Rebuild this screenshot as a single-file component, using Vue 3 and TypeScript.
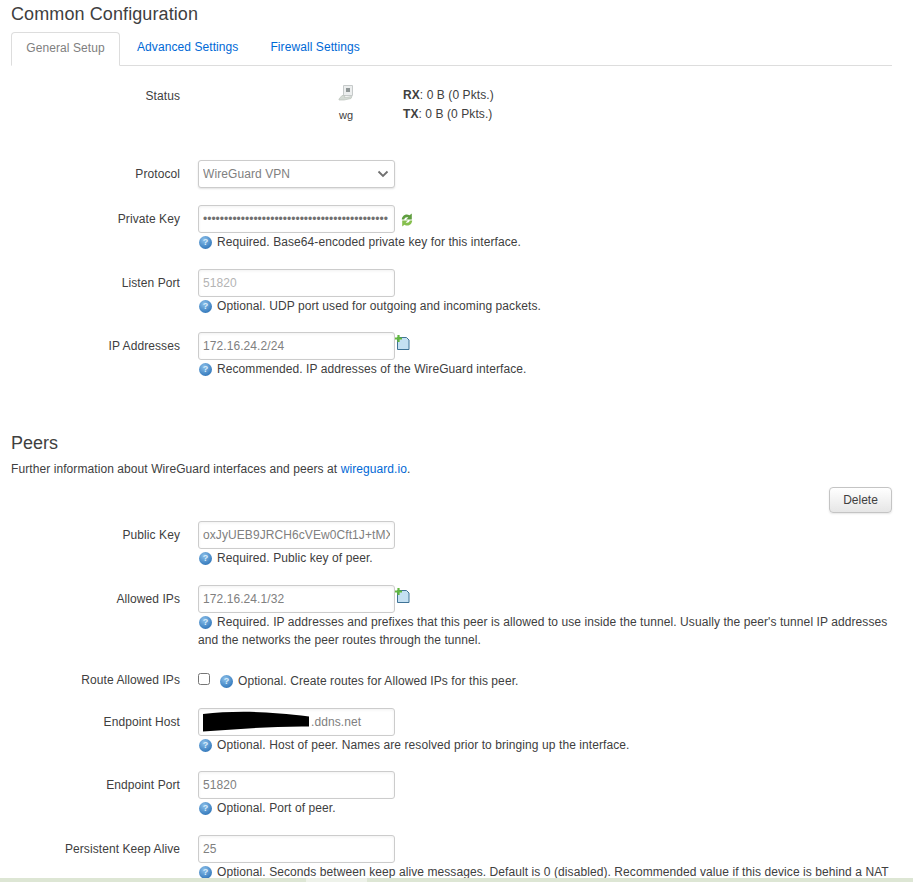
<script setup lang="ts">
const privateKey = '•'.repeat(44)
</script>

<template>
  <div class="page">
    <h3 class="title">Common Configuration</h3>
    <ul class="tabs">
      <li class="tab active">General Setup</li>
      <li class="tab link first">Advanced Settings</li>
      <li class="tab link">Firewall Settings</li>
    </ul>

    <div class="row status-row">
      <div class="label">Status</div>
      <div class="status">
        <div class="dev">
          <svg width="16" height="16" viewBox="0 0 16 16">
            <path d="M5.500 .5h9v10h-9z" fill="#eceeee" stroke="#c6caca" />
            <rect x="8" y="3" width="4" height="4" fill="#8f9696" />
            <path d="M1 14l3-3.500h3l-.5 2 7.500-1-1 2-7 1.500H1z" fill="#d4dad4" stroke="#bcc3bc" stroke-width=".7" />
          </svg>
          <span>wg</span>
        </div>
        <div class="stats">
          <div><b>RX</b>: 0 B (0 Pkts.)</div>
          <div><b>TX</b>: 0 B (0 Pkts.)</div>
        </div>
      </div>
    </div>

    <div class="row proto-row">
      <div class="label">Protocol</div>
      <div class="select-wrap">
        <select class="input select"><option>WireGuard VPN</option></select>
        <svg class="chev" width="12" height="8" viewBox="0 0 12 8"><path d="M1.500 1.500L6 6l4.500-4.500" fill="none" stroke="#707070" stroke-width="1.800" /></svg>
      </div>
    </div>

    <div class="row">
      <div class="label">Private Key</div>
      <div>
        <div class="with-icon">
          <input class="input dots" :value="privateKey" readonly />
          <svg class="refresh" width="12" height="14" viewBox="0 0 12 14">
            <path d="M.8 6.500C1 2.500 5 0 8.500 2.300L10.800 .5V6.500H5L7.300 4.600C5.500 3.700 3.800 4.500 3.200 6.500z" fill="#5f9e3f" />
            <path d="M11.200 7.500C11 11.500 7 14 3.500 11.700L1.200 13.500V7.500H7L4.700 9.400C6.500 10.300 8.200 9.500 8.800 7.500z" fill="#86bf4e" />
          </svg>
        </div>
        <div class="help"><i class="q">?</i>Required. Base64-encoded private key for this interface.</div>
      </div>
    </div>

    <div class="row short">
      <div class="label">Listen Port</div>
      <div>
        <input class="input" placeholder="51820" />
        <div class="help"><i class="q">?</i>Optional. UDP port used for outgoing and incoming packets.</div>
      </div>
    </div>

    <div class="row">
      <div class="label">IP Addresses</div>
      <div>
        <div class="with-icon">
          <input class="input" value="172.16.24.2/24" readonly />
          <svg class="add" width="15" height="15" viewBox="0 0 15 15">
            <path d="M2.500 2.500h9l2.500 2.500v9.500h-11.500z" fill="#c4e0f2" stroke="#3f7396" />
            <path d="M3.500 0v7M0 3.500h7" stroke="#62b83f" stroke-width="2.200" />
          </svg>
        </div>
        <div class="help"><i class="q">?</i>Recommended. IP addresses of the WireGuard interface.</div>
      </div>
    </div>

    <h3 class="title peers">Peers</h3>
    <p class="info">Further information about WireGuard interfaces and peers at <a>wireguard.io</a>.</p>
    <div class="actions"><button class="btn">Delete</button></div>

    <div class="row">
      <div class="label">Public Key</div>
      <div>
        <input class="input" value="oxJyUEB9JRCH6cVEw0Cft1J+tMX" readonly />
        <div class="help"><i class="q">?</i>Required. Public key of peer.</div>
      </div>
    </div>

    <div class="row allowed">
      <div class="label">Allowed IPs</div>
      <div>
        <div class="with-icon">
          <input class="input" value="172.16.24.1/32" readonly />
          <svg class="add" width="15" height="15" viewBox="0 0 15 15">
            <path d="M2.500 2.500h9l2.500 2.500v9.500h-11.500z" fill="#c4e0f2" stroke="#3f7396" />
            <path d="M3.500 0v7M0 3.500h7" stroke="#62b83f" stroke-width="2.200" />
          </svg>
        </div>
        <div class="help wrap"><i class="q">?</i>Required. IP addresses and prefixes that this peer is allowed to use inside the tunnel. Usually the peer's tunnel IP addresses and the networks the peer routes through the tunnel.</div>
      </div>
    </div>

    <div class="row check-row">
      <div class="label">Route Allowed IPs</div>
      <div class="check-line">
        <input class="check" type="checkbox" />
        <span class="help inline"><i class="q">?</i>Optional. Create routes for Allowed IPs for this peer.</span>
      </div>
    </div>

    <div class="row short">
      <div class="label">Endpoint Host</div>
      <div>
        <div class="host">
          <input class="input host-input" value=".ddns.net" readonly />
          <svg class="scribble" width="107" height="21" viewBox="0 0 107 21"><path d="M1 3C30 0 60-.5 107 5.500V15.500C70 15 35 18.500 1 20.500z" fill="#000" /></svg>
        </div>
        <div class="help"><i class="q">?</i>Optional. Host of peer. Names are resolved prior to bringing up the interface.</div>
      </div>
    </div>

    <div class="row">
      <div class="label">Endpoint Port</div>
      <div>
        <input class="input" value="51820" readonly />
        <div class="help"><i class="q">?</i>Optional. Port of peer.</div>
      </div>
    </div>

    <div class="row">
      <div class="label">Persistent Keep Alive</div>
      <div>
        <input class="input" value="25" readonly />
        <div class="help"><i class="q">?</i>Optional. Seconds between keep alive messages. Default is 0 (disabled). Recommended value if this device is behind a NAT</div>
      </div>
    </div>

    <div class="strip"><span></span><span class="light"></span><span></span></div>
  </div>
</template>

<style scoped>
.page {
  position: relative;
  width: 913px;
  height: 882px;
  overflow: hidden;
  box-sizing: border-box;
  padding: 0 21px 0 11px;
  background: #fff;
  color: #404040;
  font: 12px/18px "Liberation Sans", Arial, sans-serif;
  letter-spacing: .08px;
}
.title {
  margin: 0;
  padding-top: 4px;
  font-size: 18px;
  font-weight: 400;
  line-height: 20px;
  letter-spacing: .1px;
  color: #404040;
}
.tabs {
  display: flex;
  box-sizing: border-box;
  margin: 8px 0 0;
  padding: 0;
  list-style: none;
  height: 34px;
  border-bottom: 1px solid #ddd;
}
.tab {
  box-sizing: border-box;
  height: 34px;
  line-height: 30px;
}
.active {
  width: 109px;
  text-align: center;
  color: #808080;
  background: #fff;
  border: 1px solid #ddd;
  border-bottom-color: #fff;
  border-radius: 4px 4px 0 0;
}
.link { color: #0069d6; margin-left: 32px; }
.link.first { margin-left: 17px; }
.row {
  display: grid;
  grid-template-columns: 169px 197px;
  column-gap: 18px;
  margin-bottom: 19px;
}
.row.short { margin-bottom: 18px; }
.row.allowed { margin-bottom: 21px; }
.label {
  text-align: right;
  line-height: 18px;
  padding-top: 5px;
}
.status-row { margin: 19px 0 0; height: 75px; }
.status-row .label { padding-top: 2px; }
.status { display: flex; }
.dev {
  display: flex;
  flex-direction: column;
  align-items: center;
  flex: none;
  width: 16px;
  margin: 0 49px 0 140px;
  font-size: 11px;
  line-height: 18px;
}
.dev svg { margin-bottom: 5px; }
.stats { white-space: nowrap; margin-top: 1px; line-height: 19px; }
.proto-row { margin-bottom: 17px; }
.select-wrap { position: relative; width: 197px; height: 28px; }
.input {
  display: block;
  flex: none;
  box-sizing: border-box;
  width: 197px;
  height: 28px;
  margin: 0;
  border: 1px solid #ccc;
  border-radius: 3px;
  outline: none;
  background: #fff;
  color: #808080;
  padding: 0 4px;
  font: 12px "Liberation Sans", Arial, sans-serif;
  letter-spacing: .08px;
  box-shadow: inset 0 1px 3px rgba(0, 0, 0, .06);
}
.input::placeholder { color: #b4b4b4; opacity: 1; }
.select {
  appearance: none;
  box-shadow: 0 1px 2px rgba(0, 0, 0, .12);
}
.chev { position: absolute; right: 6px; top: 10px; }
.dots { color: #707070; letter-spacing: 0; }
.with-icon { display: flex; align-items: flex-start; width: 197px; white-space: nowrap; }
.refresh { flex: none; margin: 8px 0 0 6px; }
.add { flex: none; margin: 3px 0 0 0; }
.help {
  width: 694px;
  margin-top: 1px;
  line-height: 16px;
  color: #404040;
  white-space: nowrap;
}
.help.wrap { margin-top: 0; line-height: 18px; white-space: normal; }
.help.inline { margin: 0; width: auto; transform: translateY(1px); }
.q {
  display: inline-block;
  width: 13px;
  height: 13px;
  margin: 0 5px 0 1px;
  vertical-align: 1px;
  border-radius: 50%;
  background: radial-gradient(circle at 40% 30%, #8cc0ea, #3b7fc0 70%, #2a5f99);
  color: #d9ecfa;
  font: 700 9px/13px "Liberation Sans", sans-serif;
  font-style: normal;
  text-align: center;
}
.inline .q { margin-left: 0; }
.peers { margin-top: 55px; padding: 0; line-height: 22px; letter-spacing: 0; }
.info { margin: 6px 0 0; line-height: 18px; }
.info a { color: #0069d6; }
.actions { display: flex; justify-content: flex-end; margin: 9px 0 8px; height: 26px; }
.btn {
  box-sizing: border-box;
  width: 63px;
  height: 26px;
  padding: 0;
  border: 1px solid #c4c4c4;
  border-radius: 4px;
  background: linear-gradient(#fff, #e6e6e6);
  color: #404040;
  font: 12px "Liberation Sans", Arial, sans-serif;
  box-shadow: 0 1px 2px rgba(0, 0, 0, .1);
}
.check-row { margin-bottom: 18px; }
.check-row .label { padding-top: 1px; }
.check-line { display: flex; align-items: center; white-space: nowrap; height: 20px; }
.check {
  width: 12px;
  height: 12px;
  margin: 0 10px 0 0;
  flex: none;
  transform: translateY(-1px);
}
.host { position: relative; width: 197px; height: 28px; }
.host-input { padding-left: 112px; }
.scribble { position: absolute; left: 4px; top: 3px; }
.strip {
  position: absolute;
  left: 0;
  right: 0;
  bottom: 0;
  height: 4px;
  display: flex;
  background: #dde6d4;
}
.strip span { flex: 0 0 306px; }
.strip span:last-child { flex: 1; }
.strip .light { flex: 0 0 61px; background: #eef2ea; }
</style>
